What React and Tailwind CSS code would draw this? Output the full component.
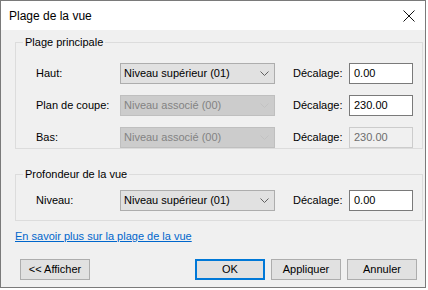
import React from 'react';

// Small chevron used inside the combo boxes
const Chevron = ({ disabled }) => (
  <svg width="9" height="5" viewBox="0 0 9 5" className="shrink-0">
    <path d="M0.5 0.5L4.5 4.5L8.5 0.5" fill="none" stroke={disabled ? '#c2c2c2' : '#606060'} strokeWidth="1" />
  </svg>
);

const CloseIcon = () => (
  <svg width="12" height="12" viewBox="0 0 12 12">
    <path d="M0.5 0.5L11.5 11.5M11.5 0.5L0.5 11.5" stroke="#111" strokeWidth="1" fill="none" />
  </svg>
);

const Combo = ({ value, disabled }) => (
  <div
    className={
      disabled
        ? 'flex items-center justify-between w-[155px] h-[21px] pl-[3px] pr-[5px] bg-[#cccccc] border border-[#bfbfbf] text-[#838383]'
        : 'flex items-center justify-between w-[155px] h-[21px] pl-[3px] pr-[5px] bg-[#e1e1e1] border border-[#adadad] text-black'
    }
  >
    <span>{value}</span>
    <Chevron disabled={disabled} />
  </div>
);

const Field = ({ value, disabled }) => (
  <div
    className={
      disabled
        ? 'flex items-center w-[64px] h-[21px] px-[4px] bg-[#f0f0f0] border border-[#cccccc] text-[#6d6d6d]'
        : 'flex items-center w-[64px] h-[21px] px-[4px] bg-white border border-[#7a7a7a] text-black'
    }
  >
    {value}
  </div>
);

const Row = ({ label, combo, comboDisabled, offset, offsetDisabled }) => (
  <div className="flex items-center h-[21px]">
    <span className="w-[84px]">{label}</span>
    <Combo value={combo} disabled={comboDisabled} />
    <span className="ml-[18px] w-[56px]">Décalage:</span>
    <Field value={offset} disabled={offsetDisabled} />
  </div>
);

const Group = ({ title, children, className }) => (
  <fieldset className={'border border-[#dcdcdc] ml-[14px] mr-[2px] ' + className}>
    <legend className="-ml-[13px] px-[2px] leading-[16px]">{title}</legend>
    {children}
  </fieldset>
);

const Button = ({ children, primary }) => (
  <button
    className={
      primary
        ? 'w-[70px] h-[21px] bg-[#e1e1e1] border-2 border-[#0078d7] text-black'
        : 'w-[70px] h-[21px] bg-[#e1e1e1] border border-[#adadad] text-black'
    }
  >
    {children}
  </button>
);

export default function App() {
  return (
    <div className="w-[428px] h-[290px] bg-white font-['Liberation_Sans',Arial,sans-serif] text-[11px] text-black">
      <div className="w-[426px] h-[288px] border border-[#7a7a7a] flex flex-col bg-[#f0f0f0]">
        {/* title bar */}
        <div className="h-[29px] bg-white flex items-center justify-between pl-[8px] pr-[10px] shrink-0">
          <span className="text-[12px]">Plage de la vue</span>
          <CloseIcon />
        </div>

        <Group title="Plage principale" className="mt-[4px] pl-[20px] pr-[8px] pt-[13px] pb-0">
          <div className="flex flex-col gap-[11px]">
            <Row label="Haut:" combo="Niveau supérieur (01)" offset="0.00" />
            <Row label="Plan de coupe:" combo="Niveau associé (00)" comboDisabled offset="230.00" />
            <Row label="Bas:" combo="Niveau associé (00)" comboDisabled offset="230.00" offsetDisabled />
          </div>
        </Group>

        <Group title="Profondeur de la vue" className="mt-[17px] pl-[20px] pr-[8px] pt-[8px] pb-[9px]">
          <Row label="Niveau:" combo="Niveau supérieur (01)" offset="0.00" />
        </Group>

        <div className="mt-[7px] pl-[14px] leading-[16px]">
          <a href="#" className="text-[#0066cc] underline">En savoir plus sur la plage de la vue</a>
        </div>

        <div className="mt-[15px] flex items-center pl-[19px] pr-[8px]">
          <Button>&lt;&lt; Afficher</Button>
          <div className="ml-auto flex gap-[6px]">
            <Button primary>OK</Button>
            <Button>Appliquer</Button>
            <Button>Annuler</Button>
          </div>
        </div>
      </div>
    </div>
  );
}
